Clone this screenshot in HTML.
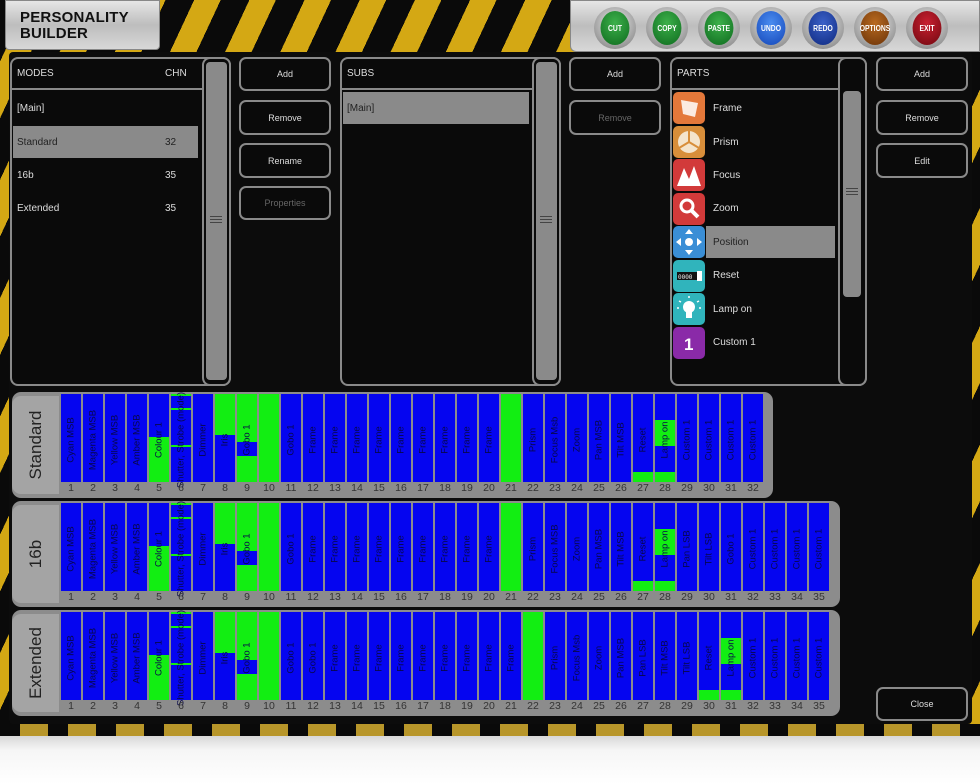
<!DOCTYPE html>
<html><head><meta charset="utf-8">
<style>
*{box-sizing:border-box;margin:0;padding:0}
body{width:980px;height:784px;overflow:hidden;position:relative;background:#000;font-family:"Liberation Sans",sans-serif}
.abs{position:absolute}
#bg{left:0;top:0;width:980px;height:740px;background:repeating-linear-gradient(115deg,#0a0a0a 0 26px,#d4a814 26px 50px)}
#main{left:9px;top:52px;width:963px;height:672px;background:#0c0c0c;border-radius:4px}
#botstrip{left:0;top:724px;width:980px;height:12px;background:repeating-linear-gradient(90deg,#0a0a0a 0 20px,#b8962a 20px 48px);}
#refl{left:0;top:736px;width:980px;height:48px;background:linear-gradient(#d8d8d8,#f6f6f6 30%,#fff)}
.plate{background:linear-gradient(180deg,#e6e6e6,#bdbdbd 50%,#d8d8d8);border:1px solid #888}
#logo{left:5px;top:0;width:155px;height:50px;border-radius:0 0 4px 4px}
#logo div{position:absolute;left:14px;top:9px;font-weight:bold;font-size:15px;line-height:16px;color:#111;letter-spacing:.2px}
#btns{left:570px;top:0;width:410px;height:52px;border-radius:0 0 0 6px}
.rb{position:absolute;top:6px;width:42px;height:42px;border-radius:50%;background:radial-gradient(circle at 50% 40%,#eee,#777);}
.rb div{position:absolute;left:4px;top:4px;width:34px;height:34px;border-radius:50%;color:#fff;font-size:8px;font-weight:bold;display:flex;align-items:center;justify-content:center;transform:scaleX(.85)}
.pan{position:absolute;border:2px solid #8a8a8a;border-radius:8px;background:#0a0a0a}
.btn{position:absolute;border:2px solid #8a8a8a;border-radius:7px;color:#ddd;font-size:9px;display:flex;align-items:center;justify-content:center;background:#0a0a0a}
.dis{color:#666}
.hd{position:absolute;color:#ddd;font-size:10px}
.line{position:absolute;height:2px;background:#8a8a8a}
.row{position:absolute;color:#ddd;font-size:10px}
.sel{position:absolute;background:#8a8a8a}
.sb{position:absolute;background:#8a8a8a;border-radius:4px}
.grip{position:absolute;width:12px;height:7px;border-top:1px solid #444;border-bottom:1px solid #444}
.grip:after{content:"";position:absolute;left:0;right:0;top:2px;height:1px;background:#444}
.ico{position:absolute;left:3px;width:32px;height:32px;border-radius:5px}
.band{position:absolute;left:12px;height:106px;background:#8c8c8c;border-radius:9px}
.tab{position:absolute;left:0;top:4px;width:47px;height:98px;background:#a4a4a4;border-radius:9px 0 0 9px}
.tab span{position:absolute;left:50%;top:50%;transform:translate(-50%,-50%) rotate(-90deg);font-size:17px;color:#222;white-space:nowrap}
.cells{position:absolute;left:49px;top:2px;display:flex}
.c{position:relative;width:20px;height:88px;background:#0505f0;margin-right:2px;flex:none}
.c i{position:absolute;left:0;right:0;background:#12ee12}
.c span{position:absolute;left:50%;top:46px;transform:translate(-50%,-50%) rotate(-90deg);white-space:nowrap;font-size:9.5px;color:#08084a}
.nums{position:absolute;left:49px;top:90px;display:flex}
.nums div{width:22px;text-align:center;font-size:10.5px;color:#333;flex:none;padding-right:2px}
</style></head><body>
<div id="bg" class="abs"></div>
<div id="main" class="abs"></div>
<div id="botstrip" class="abs"></div>
<div id="refl" class="abs"></div>

<div id="logo" class="abs plate"><div>PERSONALITY<br>BUILDER</div></div>
<div id="btns" class="abs plate">
<div class="rb" style="left:23px"><div style="background:radial-gradient(circle at 50% 35%,#3cb04a,#0e6a1e)">CUT</div></div>
<div class="rb" style="left:75px"><div style="background:radial-gradient(circle at 50% 35%,#3cb04a,#0e6a1e)">COPY</div></div>
<div class="rb" style="left:127px"><div style="background:radial-gradient(circle at 50% 35%,#3cb04a,#0e6a1e)">PASTE</div></div>
<div class="rb" style="left:179px"><div style="background:radial-gradient(circle at 50% 35%,#4a8cf0,#1446b8)">UNDO</div></div>
<div class="rb" style="left:231px"><div style="background:radial-gradient(circle at 50% 35%,#3a60c8,#102a80)">REDO</div></div>
<div class="rb" style="left:283px"><div style="background:radial-gradient(circle at 50% 35%,#b86a20,#6a3208)">OPTIONS</div></div>
<div class="rb" style="left:335px"><div style="background:radial-gradient(circle at 50% 35%,#c82030,#700810)">EXIT</div></div>
</div>

<!-- MODES -->
<div class="pan" style="left:10px;top:57px;width:221px;height:329px"></div>
<div class="hd" style="left:17px;top:68px">MODES</div><div class="hd" style="left:165px;top:68px">CHN</div>
<div class="line" style="left:12px;top:88px;width:190px"></div>
<div class="row" style="left:17px;top:103px">[Main]</div>
<div class="sel" style="left:13px;top:126px;width:185px;height:32px"></div>
<div class="row" style="left:17px;top:137px;color:#222">Standard</div><div class="row" style="left:165px;top:137px;color:#222">32</div>
<div class="row" style="left:17px;top:170px">16b</div><div class="row" style="left:165px;top:170px">35</div>
<div class="row" style="left:17px;top:203px">Extended</div><div class="row" style="left:165px;top:203px">35</div>
<div class="pan" style="left:202px;top:57px;width:29px;height:329px"></div>
<div class="sb" style="left:206px;top:62px;width:21px;height:318px"></div>
<div class="grip" style="left:210px;top:216px"></div>

<div class="btn" style="left:239px;top:57px;width:92px;height:34px">Add</div>
<div class="btn" style="left:239px;top:100px;width:92px;height:35px">Remove</div>
<div class="btn" style="left:239px;top:143px;width:92px;height:35px">Rename</div>
<div class="btn dis" style="left:239px;top:186px;width:92px;height:34px">Properties</div>

<!-- SUBS -->
<div class="pan" style="left:340px;top:57px;width:221px;height:329px"></div>
<div class="hd" style="left:347px;top:68px">SUBS</div>
<div class="line" style="left:342px;top:88px;width:190px"></div>
<div class="sel" style="left:343px;top:92px;width:186px;height:32px"></div>
<div class="row" style="left:347px;top:103px;color:#222">[Main]</div>
<div class="pan" style="left:532px;top:57px;width:29px;height:329px"></div>
<div class="sb" style="left:536px;top:62px;width:21px;height:318px"></div>
<div class="grip" style="left:540px;top:216px"></div>

<div class="btn" style="left:569px;top:57px;width:92px;height:34px">Add</div>
<div class="btn dis" style="left:569px;top:100px;width:92px;height:35px">Remove</div>

<!-- PARTS -->
<div class="pan" style="left:670px;top:57px;width:197px;height:329px"></div>
<div class="hd" style="left:677px;top:68px">PARTS</div>
<div class="line" style="left:672px;top:88px;width:167px"></div>
<div class="pan" style="left:838px;top:57px;width:29px;height:329px"></div>
<div class="sb" style="left:843px;top:91px;width:18px;height:206px"></div>
<div class="grip" style="left:846px;top:188px"></div>
<div class="sel" style="left:706px;top:226px;width:129px;height:32px"></div>
<div style="position:absolute;left:670px;top:0">
<div class="ico" style="top:92px;background:#e4783a"><svg width="32" height="32"><path d="M8 8 L25 11 L22 25 L10 22 Z" fill="#fff" opacity=".85"/></svg></div>
<div class="ico" style="top:126px;background:#d88e3a"><svg width="32" height="32"><circle cx="16" cy="16" r="11" fill="#f4e4cc"/><path d="M16 5V16L6 22M16 16L26 22" stroke="#d88e3a" stroke-width="2" fill="none"/></svg></div>
<div class="ico" style="top:159px;background:#d23a3a"><svg width="32" height="32"><path d="M4 27 L11 9 L16 20 L21 7 L28 27Z" fill="#fff"/></svg></div>
<div class="ico" style="top:193px;background:#d23a3a"><svg width="32" height="32"><circle cx="14" cy="13" r="6" stroke="#fff" stroke-width="3" fill="none"/><path d="M18 17 L25 24" stroke="#fff" stroke-width="4"/></svg></div>
<div class="ico" style="top:226px;background:#3a8ed6"><svg width="32" height="32"><circle cx="16" cy="16" r="4" fill="#fff"/><path d="M16 3l4 5h-8zM16 29l4-5h-8zM3 16l5 4v-8zM29 16l-5 4v-8z" fill="#fff"/></svg></div>
<div class="ico" style="top:260px;background:#30b4bc"><svg width="32" height="32"><rect x="4" y="12" width="20" height="8" fill="#111"/><text x="5" y="19" font-size="6" fill="#fff" font-family="Liberation Mono">0000</text><rect x="24" y="11" width="5" height="10" fill="#fff"/></svg></div>
<div class="ico" style="top:293px;background:#30b4bc"><svg width="32" height="32"><circle cx="16" cy="14" r="6" fill="#fff"/><rect x="13" y="19" width="6" height="6" fill="#fff"/><path d="M16 3v2M6 8l2 1M26 8l-2 1M4 15h2M26 15h2" stroke="#fff" stroke-width="1.5"/></svg></div>
<div class="ico" style="top:327px;background:#8a2aa8"><svg width="32" height="32"><text x="11" y="23" font-size="17" font-weight="bold" fill="#fff" font-family="Liberation Sans">1</text></svg></div>
</div>
<div class="row" style="left:713px;top:103px">Frame</div>
<div class="row" style="left:713px;top:137px">Prism</div>
<div class="row" style="left:713px;top:170px">Focus</div>
<div class="row" style="left:713px;top:203px">Zoom</div>
<div class="row" style="left:713px;top:237px;color:#222">Position</div>
<div class="row" style="left:713px;top:270px">Reset</div>
<div class="row" style="left:713px;top:304px">Lamp on</div>
<div class="row" style="left:713px;top:337px">Custom 1</div>

<div class="btn" style="left:876px;top:57px;width:92px;height:34px">Add</div>
<div class="btn" style="left:876px;top:100px;width:92px;height:35px">Remove</div>
<div class="btn" style="left:876px;top:143px;width:92px;height:35px">Edit</div>
<div class="btn" style="left:876px;top:687px;width:92px;height:34px">Close</div>

<!-- STANDARD -->
<div class="band" style="top:392px;width:761px">
<div class="tab"><span>Standard</span></div>
<div class="cells">
<div class="c"><span>Cyan MSB</span></div>
<div class="c"><span>Magenta MSB</span></div>
<div class="c"><span>Yellow MSB</span></div>
<div class="c"><span>Amber MSB</span></div>
<div class="c"><i style="top:43px;bottom:0"></i><span>Colour 1</span></div>
<div class="c"><i style="top:0;height:2px"></i><i style="top:14px;height:2px"></i><i style="top:51px;height:2px"></i><span>Shutter, Strobe (mode)</span></div>
<div class="c"><span>Dimmer</span></div>
<div class="c"><i style="top:0;height:41px"></i><span>Iris</span></div>
<div class="c" style="background:#12ee12"><i style="top:48px;height:14px;background:#0505f0"></i><span>Gobo 1</span></div>
<div class="c" style="background:#12ee12"></div>
<div class="c"><span>Gobo 1</span></div>
<div class="c"><span>Frame</span></div>
<div class="c"><span>Frame</span></div>
<div class="c"><span>Frame</span></div>
<div class="c"><span>Frame</span></div>
<div class="c"><span>Frame</span></div>
<div class="c"><span>Frame</span></div>
<div class="c"><span>Frame</span></div>
<div class="c"><span>Frame</span></div>
<div class="c"><span>Frame</span></div>
<div class="c" style="background:#12ee12"></div>
<div class="c"><span>Prism</span></div>
<div class="c"><span>Focus Msb</span></div>
<div class="c"><span>Zoom</span></div>
<div class="c"><span>Pan MSB</span></div>
<div class="c"><span>Tilt MSB</span></div>
<div class="c"><i style="top:78px;bottom:0"></i><span>Reset</span></div>
<div class="c"><i style="top:26px;height:26px"></i><i style="top:78px;bottom:0"></i><span>Lamp on</span></div>
<div class="c"><span>Custom 1</span></div>
<div class="c"><span>Custom 1</span></div>
<div class="c"><span>Custom 1</span></div>
<div class="c"><span>Custom 1</span></div>
</div>
<div class="nums"><div>1</div><div>2</div><div>3</div><div>4</div><div>5</div><div>6</div><div>7</div><div>8</div><div>9</div><div>10</div><div>11</div><div>12</div><div>13</div><div>14</div><div>15</div><div>16</div><div>17</div><div>18</div><div>19</div><div>20</div><div>21</div><div>22</div><div>23</div><div>24</div><div>25</div><div>26</div><div>27</div><div>28</div><div>29</div><div>30</div><div>31</div><div>32</div></div>
</div>

<!-- 16b -->
<div class="band" style="top:501px;width:828px">
<div class="tab"><span>16b</span></div>
<div class="cells">
<div class="c"><span>Cyan MSB</span></div>
<div class="c"><span>Magenta MSB</span></div>
<div class="c"><span>Yellow MSB</span></div>
<div class="c"><span>Amber MSB</span></div>
<div class="c"><i style="top:43px;bottom:0"></i><span>Colour 1</span></div>
<div class="c"><i style="top:0;height:2px"></i><i style="top:14px;height:2px"></i><i style="top:51px;height:2px"></i><span>Shutter, Strobe (mode)</span></div>
<div class="c"><span>Dimmer</span></div>
<div class="c"><i style="top:0;height:41px"></i><span>Iris</span></div>
<div class="c" style="background:#12ee12"><i style="top:48px;height:14px;background:#0505f0"></i><span>Gobo 1</span></div>
<div class="c" style="background:#12ee12"></div>
<div class="c"><span>Gobo 1</span></div>
<div class="c"><span>Frame</span></div>
<div class="c"><span>Frame</span></div>
<div class="c"><span>Frame</span></div>
<div class="c"><span>Frame</span></div>
<div class="c"><span>Frame</span></div>
<div class="c"><span>Frame</span></div>
<div class="c"><span>Frame</span></div>
<div class="c"><span>Frame</span></div>
<div class="c"><span>Frame</span></div>
<div class="c" style="background:#12ee12"></div>
<div class="c"><span>Prism</span></div>
<div class="c"><span>Focus MSB</span></div>
<div class="c"><span>Zoom</span></div>
<div class="c"><span>Pan MSB</span></div>
<div class="c"><span>Tilt MSB</span></div>
<div class="c"><i style="top:78px;bottom:0"></i><span>Reset</span></div>
<div class="c"><i style="top:26px;height:26px"></i><i style="top:78px;bottom:0"></i><span>Lamp on</span></div>
<div class="c"><span>Pan LSB</span></div>
<div class="c"><span>Tilt LSB</span></div>
<div class="c"><span>Gobo 1</span></div>
<div class="c"><span>Custom 1</span></div>
<div class="c"><span>Custom 1</span></div>
<div class="c"><span>Custom 1</span></div>
<div class="c"><span>Custom 1</span></div>
</div>
<div class="nums"><div>1</div><div>2</div><div>3</div><div>4</div><div>5</div><div>6</div><div>7</div><div>8</div><div>9</div><div>10</div><div>11</div><div>12</div><div>13</div><div>14</div><div>15</div><div>16</div><div>17</div><div>18</div><div>19</div><div>20</div><div>21</div><div>22</div><div>23</div><div>24</div><div>25</div><div>26</div><div>27</div><div>28</div><div>29</div><div>30</div><div>31</div><div>32</div><div>33</div><div>34</div><div>35</div></div>
</div>

<!-- Extended -->
<div class="band" style="top:610px;width:828px">
<div class="tab"><span>Extended</span></div>
<div class="cells">
<div class="c"><span>Cyan MSB</span></div>
<div class="c"><span>Magenta MSB</span></div>
<div class="c"><span>Yellow MSB</span></div>
<div class="c"><span>Amber MSB</span></div>
<div class="c"><i style="top:43px;bottom:0"></i><span>Colour 1</span></div>
<div class="c"><i style="top:0;height:2px"></i><i style="top:14px;height:2px"></i><i style="top:51px;height:2px"></i><span>Shutter, Strobe (mode)</span></div>
<div class="c"><span>Dimmer</span></div>
<div class="c"><i style="top:0;height:41px"></i><span>Iris</span></div>
<div class="c" style="background:#12ee12"><i style="top:48px;height:14px;background:#0505f0"></i><span>Gobo 1</span></div>
<div class="c" style="background:#12ee12"></div>
<div class="c"><span>Gobo 1</span></div>
<div class="c"><span>Gobo 1</span></div>
<div class="c"><span>Frame</span></div>
<div class="c"><span>Frame</span></div>
<div class="c"><span>Frame</span></div>
<div class="c"><span>Frame</span></div>
<div class="c"><span>Frame</span></div>
<div class="c"><span>Frame</span></div>
<div class="c"><span>Frame</span></div>
<div class="c"><span>Frame</span></div>
<div class="c"><span>Frame</span></div>
<div class="c" style="background:#12ee12"></div>
<div class="c"><span>Prism</span></div>
<div class="c"><span>Focus Msb</span></div>
<div class="c"><span>Zoom</span></div>
<div class="c"><span>Pan MSB</span></div>
<div class="c"><span>Pan LSB</span></div>
<div class="c"><span>Tilt MSB</span></div>
<div class="c"><span>Tilt LSB</span></div>
<div class="c"><i style="top:78px;bottom:0"></i><span>Reset</span></div>
<div class="c"><i style="top:26px;height:26px"></i><i style="top:78px;bottom:0"></i><span>Lamp on</span></div>
<div class="c"><span>Custom 1</span></div>
<div class="c"><span>Custom 1</span></div>
<div class="c"><span>Custom 1</span></div>
<div class="c"><span>Custom 1</span></div>
</div>
<div class="nums"><div>1</div><div>2</div><div>3</div><div>4</div><div>5</div><div>6</div><div>7</div><div>8</div><div>9</div><div>10</div><div>11</div><div>12</div><div>13</div><div>14</div><div>15</div><div>16</div><div>17</div><div>18</div><div>19</div><div>20</div><div>21</div><div>22</div><div>23</div><div>24</div><div>25</div><div>26</div><div>27</div><div>28</div><div>29</div><div>30</div><div>31</div><div>32</div><div>33</div><div>34</div><div>35</div></div>
</div>
</body></html>
